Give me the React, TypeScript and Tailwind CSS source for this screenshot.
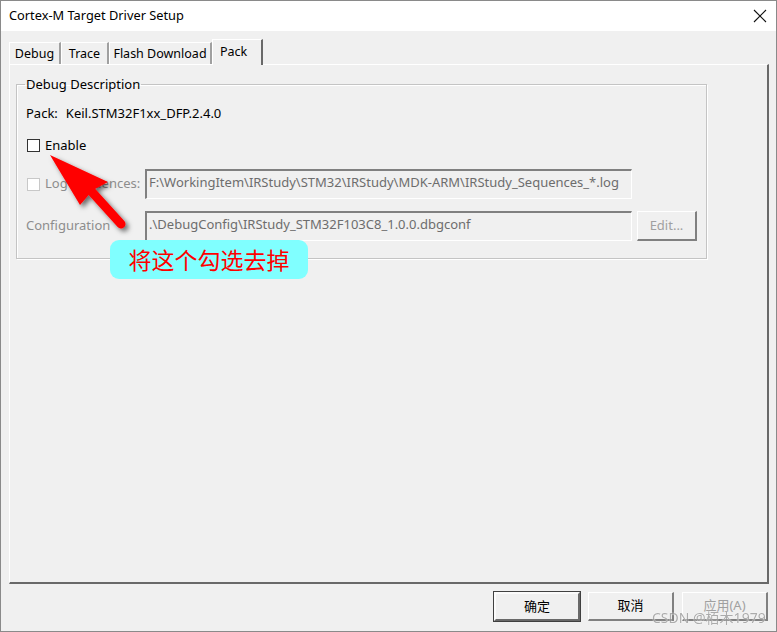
import React from 'react'

const ui = { fontFamily: '"Noto Sans", "Noto Sans CJK SC", sans-serif' }

function Tab({ label, width, active }: { label: string; width: string; active?: boolean }) {
  if (active) {
    return (
      <div className={`${width} relative z-10 -mb-px flex h-[26px] items-start border-l border-t border-white border-r-2 border-r-[#696969] bg-[#f0f0f0] pl-[7px] pt-[3px] text-[12.5px]`}>
        <span>{label}</span>
      </div>
    )
  }
  return (
    <div className={`${width} mt-[3px] flex h-[22px] items-center justify-center border-l border-t border-white border-r-2 border-r-[#a0a0a0] pt-[1px] text-[12.5px]`}>
      <span>{label}</span>
    </div>
  )
}

function Sunken({ text, width }: { text: string; width: string }) {
  return (
    <div className={`${width} h-[30px] border-l-2 border-t-2 border-l-[#808080] border-t-[#808080] border-b border-r border-white bg-[#f0f0f0] pl-[2px] pt-[2px] text-[#6d6d6d]`}>
      {text}
    </div>
  )
}

function Btn({ label, primary, disabled }: { label: string; primary?: boolean; disabled?: boolean }) {
  return (
    <div
      className={`flex h-[29px] w-[86px] items-center justify-center bg-[#f0f0f0] ${
        primary
          ? 'border-2 border-l-[#fbfbfb] border-t-[#fbfbfb] border-r-[#696969] border-b-[#696969] outline outline-1 outline-[#404040]'
          : 'border-l border-t border-white border-r-2 border-b-2 border-r-[#808080] border-b-[#808080]'
      } ${disabled ? 'text-[#a0a0a0]' : 'text-black'}`}
    >
      {label}
    </div>
  )
}

function Check({ disabled }: { disabled?: boolean }) {
  return (
    <div className={`h-[13px] w-[13px] border bg-white ${disabled ? 'border-[#c8c8c8] bg-[#f0f0f0]' : 'border-[#333]'}`} />
  )
}

export default function App() {
  return (
    <div className="relative h-[632px] w-[777px] overflow-hidden bg-[#3c3c3c] text-[13px] text-black" style={ui}>
      <div className="flex h-full flex-col border border-[#8a8a8a] bg-[#f0f0f0]">
        {/* Title bar */}
        <div className="flex h-[30px] shrink-0 items-center justify-between bg-white pl-[8px] pr-[9px]">
          <span className="text-[12.8px]">Cortex-M Target Driver Setup</span>
          <svg width="14" height="14" viewBox="0 0 14 14">
            <path d="M1 1 L13 13 M13 1 L1 13" stroke="#111" strokeWidth="1.1" />
          </svg>
        </div>

        {/* Tabs */}
        <div className="ml-[8px] mt-[8px] flex items-end">
          <Tab label="Debug" width="w-[52px]" />
          <Tab label="Trace" width="w-[48px]" />
          <Tab label="Flash Download" width="w-[103px]" />
          <Tab label="Pack" width="w-[51px]" active />
        </div>

        {/* Tab page */}
        <div className="ml-[8px] mr-[7px] h-[520px] border-l border-t border-white border-r-2 border-b-2 border-r-[#696969] border-b-[#696969] px-[6px] pt-[12px]">
          <fieldset className="h-[182px] w-[690px] border border-[#c4c4c4] px-[9px] pb-0 pt-0 shadow-[inset_1px_1px_0_#fff,1px_1px_0_#fff]">
            <legend className="-ml-[1px] px-[1px] leading-[14px]">Debug Description</legend>
            <div className="mt-[13px] flex">
              <span className="mr-[8px]">Pack:</span>
              <span>Keil.STM32F1xx_DFP.2.4.0</span>
            </div>
            <div className="mt-[12px] flex items-center gap-[5px] pl-px">
              <Check />
              <span>Enable</span>
            </div>
            <div className="mt-[14px] flex items-center">
              <div className="flex w-[119px] items-center gap-[5px] pl-px text-[#8d8d8d]">
                <Check disabled />
                <span>Log Sequences:</span>
              </div>
              <Sunken width="w-[487px]" text="F:\WorkingItem\IRStudy\STM32\IRStudy\MDK-ARM\IRStudy_Sequences_*.log" />
            </div>
            <div className="mt-[12px] flex items-center">
              <span className="w-[119px] text-[#8d8d8d]">Configuration</span>
              <Sunken width="w-[487px]" text=".\DebugConfig\IRStudy_STM32F103C8_1.0.0.dbgconf" />
              <div className="ml-[5px] flex h-[30px] w-[60px] items-center justify-center border-l border-t border-white border-r-2 border-b-2 border-r-[#808080] border-b-[#808080] text-[#a0a0a0]">
                Edit...
              </div>
            </div>
          </fieldset>
        </div>

        {/* Buttons */}
        <div className="mr-[8px] mt-[8px] flex justify-end gap-[8px]">
          <Btn label="确定" primary />
          <Btn label="取消" />
          <Btn label="应用(A)" disabled />
        </div>
      </div>

      {/* Annotation arrow */}
      <svg className="pointer-events-none absolute left-0 top-0" width="200" height="260" viewBox="0 0 200 260">
        <defs>
          <filter id="sh" x="-50%" y="-50%" width="200%" height="200%">
            <feDropShadow dx="3" dy="3" stdDeviation="2.5" floodColor="#000" floodOpacity="0.55" />
          </filter>
        </defs>
        <g filter="url(#sh)">
          <line x1="92" y1="192" x2="121" y2="224" stroke="#ff0000" strokeWidth="9" strokeLinecap="round" />
          <polygon points="50,155 108,182 93,190 80,205" fill="#ff0000" />
        </g>
      </svg>

      {/* Callout */}
      <div
        className="absolute left-[110px] top-[240px] flex h-[39px] w-[198px] items-center justify-center rounded-[9px] bg-[#80ffff] text-[23px] text-[#ff0000]"
        style={{ fontFamily: '"Noto Sans CJK SC", sans-serif' }}
      >
        将这个勾选去掉
      </div>

      {/* Watermark */}
      <div
        className="absolute left-[652px] top-[607px] text-[14px] text-[#9a9a9a] opacity-80"
        style={{ textShadow: '0 0 1px #fff, 0 0 1px #fff', fontFamily: '"Noto Sans", "Noto Sans CJK SC", sans-serif' }}
      >
        CSDN @栢木1979
      </div>
    </div>
  )
}
